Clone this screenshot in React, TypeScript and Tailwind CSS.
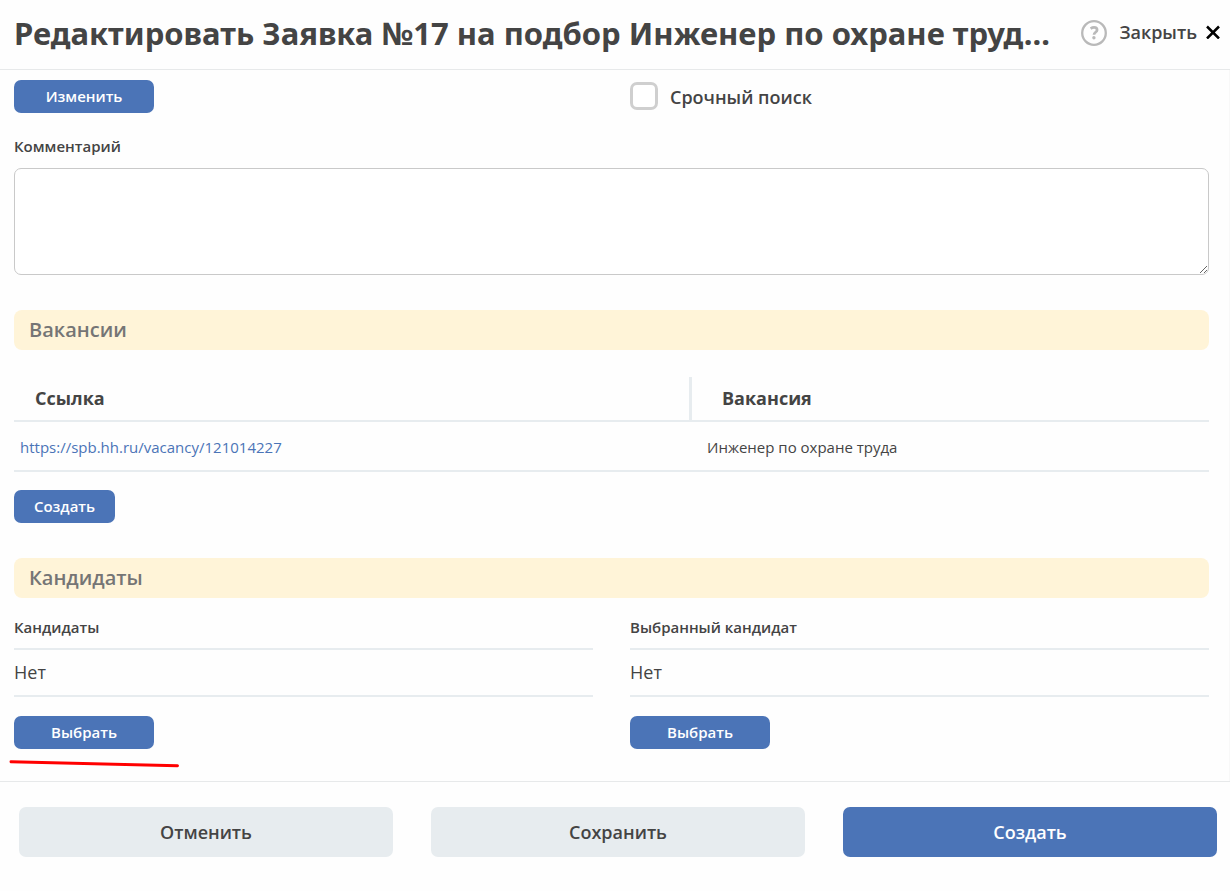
import type { ReactNode } from "react";

function ActionButton({ children, wide = true }: { children: ReactNode; wide?: boolean }) {
  return (
    <button
      type="button"
      className={`block h-[33px] rounded-[7px] bg-[#4b74b7] pb-0.5 text-[15px] leading-5 font-semibold text-white ${wide ? "w-[140px]" : "w-[101px]"}`}
    >
      {children}
    </button>
  );
}

function SectionTitle({ children }: { children: ReactNode }) {
  return (
    <h2 className="mt-[35px] h-10 rounded-lg bg-[#fff4d8] px-[15px] text-xl leading-10 font-semibold text-[#757575]">
      {children}
    </h2>
  );
}

function CandidateField({ label }: { label: string }) {
  return (
    <div>
      <h3 className="text-[15px] leading-5 font-semibold">{label}</h3>
      <p className="mt-[11px] mb-[19px] h-[49px] border-y-2 border-[#e7ecef] text-lg leading-[45px]">Нет</p>
      <ActionButton>Выбрать</ActionButton>
    </div>
  );
}

export default function App() {
  return (
    <div className="flex min-h-screen flex-col bg-[#fefefe] font-['Open_Sans','Noto_Sans',sans-serif] text-[#444444]">
      <header className="flex h-[70px] items-center border-b border-[#e7e9ea] pr-2.5 pb-1 pl-3.5">
        <h1 className="min-w-0 flex-1 font-['Noto_Sans','Open_Sans',sans-serif] text-[31px] leading-[44px] font-bold whitespace-nowrap">
          Редактировать Заявка №17 на подбор Инженер по охране труд...
        </h1>
        <button type="button" aria-label="Справка" className="shrink-0">
          <svg width="26" height="26" viewBox="0 0 26 26" fill="none" stroke="#b9b9b9">
            <circle cx="13" cy="13" r="11.8" strokeWidth="2.3" />
            <path d="M9.6 8.6C10.9 7.7 12 7.4 13.1 7.4c1.9 0 3 .9 3 2.5 0 2.4-3.1 2.4-3.1 4.9" strokeWidth="2.7" />
            <circle cx="12.9" cy="17.8" r="1.7" fill="#b9b9b9" stroke="none" />
          </svg>
        </button>
        <button type="button" className="ml-3 flex shrink-0 items-center gap-[9px] pb-0.5 text-lg leading-6 font-semibold">
          Закрыть
          <svg width="14" height="14" viewBox="0 0 14 14" fill="none" stroke="#000000" strokeWidth="2.5">
            <path d="M1 1.5l12 12M13 1.5L1 13.5" />
          </svg>
        </button>
      </header>

      <main className="border-r border-[#f8f8f8] pt-2.5 pr-5 pb-8 pl-3.5">
        <div className="grid grid-cols-2 gap-x-[37px]">
          <div>
            <ActionButton>Изменить</ActionButton>
          </div>
          <label className="flex h-8 items-center gap-3 text-lg leading-6 font-semibold">
            <input
              type="checkbox"
              className="size-7 appearance-none rounded-[7px] border-3 border-[#cfcfcf] bg-white checked:bg-[#4b74b7]"
            />
            <span className="pt-0.5">Срочный поиск</span>
          </label>
        </div>

        <label htmlFor="comment" className="mt-[23px] mb-3 block text-[15px] leading-5 font-semibold">
          Комментарий
        </label>
        <textarea
          id="comment"
          className="block h-[107px] w-full resize rounded-[7px] border border-[#c9c9c9] bg-white p-2 text-base"
        />

        <SectionTitle>Вакансии</SectionTitle>
        <table className="mt-[27px] mb-[18px] w-full table-fixed border-separate border-spacing-0 text-left">
          <thead>
            <tr className="h-[45px] text-lg leading-6">
              <th className="w-[678px] border-r-3 border-b-2 border-[#e7ecef] p-0 pb-0.5 pl-[21px] font-bold">Ссылка</th>
              <th className="border-b-2 border-[#e7ecef] p-0 pb-0.5 pl-[30px] font-bold">Вакансия</th>
            </tr>
          </thead>
          <tbody>
            <tr className="h-[50px] text-[15px] leading-5">
              <td className="border-b-2 border-[#e7ecef] p-0 pt-0.5 pl-1.5">
                <a href="https://spb.hh.ru/vacancy/121014227" className="text-[#4b74b7]">
                  https://spb.hh.ru/vacancy/121014227
                </a>
              </td>
              <td className="border-b-2 border-[#e7ecef] p-0 pt-0.5 pl-[15px]">Инженер по охране труда</td>
            </tr>
          </tbody>
        </table>
        <ActionButton wide={false}>Создать</ActionButton>

        <SectionTitle>Кандидаты</SectionTitle>
        <div className="relative mt-[19px] grid grid-cols-2 gap-x-[37px]">
          <CandidateField label="Кандидаты" />
          <CandidateField label="Выбранный кандидат" />
          <svg
            width="172"
            height="10"
            viewBox="0 0 172 10"
            className="absolute top-full -left-1.5 mt-2.5"
            aria-hidden="true"
          >
            <path d="M3 2.8L169.5 6.8" stroke="#ff0000" strokeWidth="3" strokeLinecap="round" />
          </svg>
        </div>
      </main>

      <footer className="grid grid-cols-3 gap-x-[38px] border-t border-[#e7e9ea] pt-[25px] pr-[13px] pb-8 pl-[19px] text-lg leading-6 font-semibold">
        <button type="button" className="h-[50px] rounded-[7px] bg-[#e7ecef]">
          Отменить
        </button>
        <button type="button" className="h-[50px] rounded-[7px] bg-[#e7ecef]">
          Сохранить
        </button>
        <button type="button" className="h-[50px] rounded-[7px] bg-[#4b74b7] text-white">
          Создать
        </button>
      </footer>
    </div>
  );
}
